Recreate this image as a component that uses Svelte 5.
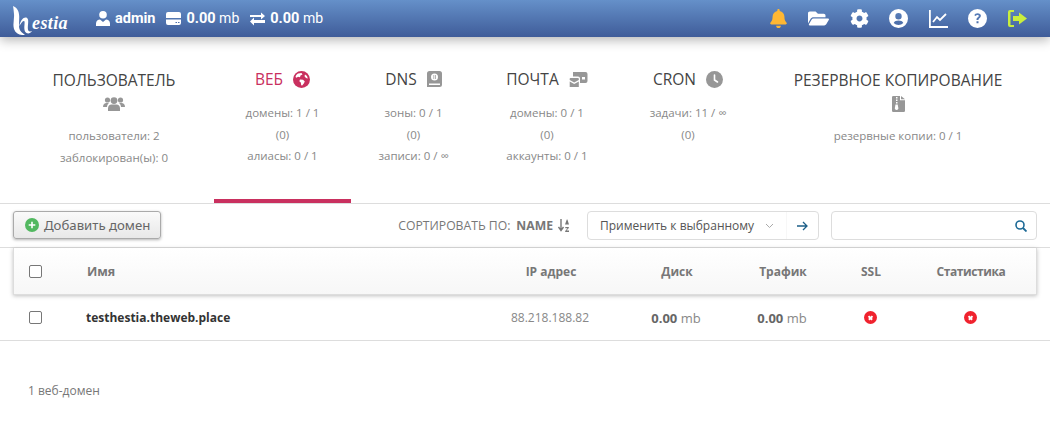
<script>
	const tabs = [
		{ title: 'ПОЛЬЗОВАТЕЛЬ', icon: 'users', below: true, lines: ['пользователи: 2', 'заблокирован(ы): 0'] },
		{ title: 'ВЕБ', icon: 'globe', active: true, lines: ['домены: 1 / 1', '(0)', 'алиасы: 0 / 1'] },
		{ title: 'DNS', icon: 'book', lines: ['зоны: 0 / 1', '(0)', 'записи: 0 / ∞'] },
		{ title: 'ПОЧТА', icon: 'mail', lines: ['домены: 0 / 1', '(0)', 'аккаунты: 0 / 1'] },
		{ title: 'CRON', icon: 'clock', lines: ['задачи: 11 / ∞', '(0)'] },
		{ title: 'РЕЗЕРВНОЕ КОПИРОВАНИЕ', icon: 'zip', below: true, lines: ['резервные копии: 0 / 1'] }
	];
</script>

{#snippet tabIcon(name)}
	{#if name === 'users'}
		<svg width="22" height="16" viewBox="0 0 22 16"><circle cx="4.500" cy="4" r="2.600"/><circle cx="17.500" cy="4" r="2.600"/><circle cx="11" cy="4.600" r="3.400"/><path d="M0 11c0-2.500 1.500-4 3.500-4H6C4.800 8 4 9.500 4 11zM22 11c0-2.500-1.500-4-3.500-4H16c1.200 1 2 2.500 2 4zM5 15v-2.500C5 10 6.500 8.500 8.500 8.500h5c2 0 3.500 1.500 3.500 4V15z"/></svg>
	{:else if name === 'globe'}
		<svg width="17" height="17" viewBox="0 0 17 17"><circle cx="8.500" cy="8.500" r="8.500"/><path fill="#fff" d="M5 2.500l3.500-.5 1 1.500-2 1-.5 1.800-2-.6-1.500 1-1-.7C2.800 4.500 3.500 3.400 5 2.500zM7 8.500l3 .3 1.800 1.700-1 2-1.600 2-1-.3-.4-2.700-1.500-1.200zM12 3.500l2 1.500 .8 2.500-1.800-.5-1.500-1.800z"/></svg>
	{:else if name === 'book'}
		<svg width="15" height="16" viewBox="0 0 15 16"><path fill-rule="evenodd" d="M2.500 0h10A2.500 2.500 0 0 1 15 2.500v11a2.500 2.500 0 0 1-2.500 2.500H0V2.500A2.500 2.500 0 0 1 2.500 0zM7.500 2.500a3.500 3.500 0 1 0 0 7 3.500 3.500 0 0 0 0-7zM2 12.500V14h11v-1.500z"/><path d="M6.500 4h.7v4h-.7zM8 4h.7v4H8z"/></svg>
	{:else if name === 'mail'}
		<svg width="19" height="15" viewBox="0 0 19 15"><path d="M4 0h12.500a2 2 0 0 1 2 2v7a2 2 0 0 1-2 2H11V6.500A2 2 0 0 0 9 4.500H4z"/><path d="M1.500 6H9a.8.800 0 0 1 .8.800V8L5.200 10.500 .7 8V6.800A.8.800 0 0 1 1.500 6zM.7 9.500l4.500 2.500 4.600-2.500V15H.7z"/><rect x="13" y="5" width="3" height="2.500" fill="#fff"/></svg>
	{:else if name === 'clock'}
		<svg width="17" height="17" viewBox="0 0 17 17"><circle cx="8.500" cy="8.500" r="8.500"/><path d="M8.500 4v5l3 2" fill="none" stroke="#fff" stroke-width="1.600" stroke-linecap="round"/></svg>
	{:else}
		<svg width="13" height="16" viewBox="0 0 13 16"><path fill-rule="evenodd" d="M1.200 0H8v4.300h5v10.500A1.200 1.200 0 0 1 11.800 16H1.200A1.200 1.200 0 0 1 0 14.800V1.200A1.200 1.200 0 0 1 1.200 0zM4 1v1.500h1.500V1zM4 3.500V5h1.500V3.500zM4 6v1.500h1.500V6zM3.500 8.500l-.6 3.200a1.800 1.800 0 1 0 3.400 0L5.700 8.500z"/><path d="M9 0l4 3.300H9z"/></svg>
	{/if}
{/snippet}

<header class="topbar">
	<div class="logo">
		<svg width="19" height="29" viewBox="0 0 19 29"><path d="M0 0c4 1.500 6 5 6.200 10 .2 5-.7 10 .3 13 .8 2.500 3 4 5.500 6-5 .5-9.500-1.500-11-6C-.5 18 1.500 13 1 8 .8 5 .5 3 0 0z"/><path d="M6.500 19c1-4 3.500-7.500 6-7.500 2.500 0 3 2.500 2.600 6-.3 3-.5 5.500.2 7 .6 1 2 1.200 3.700.5-1.300 2-3.500 3-5.500 2-2.500-1.500-2.300-5.500-2-8.500.2-2 .2-3.500-.5-3.500-1.500 0-3 2-4.500 5z"/></svg>
		<span>estia</span>
	</div>
	<div class="stat">
		<svg width="14" height="15" viewBox="0 0 14 15"><circle cx="7" cy="3.800" r="3.800"/><path d="M0 15v-2.500C0 10 2 8.500 4 8.500l3 2.500 3-2.500c2 0 4 1.500 4 4V15z"/></svg>
		<b>admin</b>
	</div>
	<div class="stat">
		<svg width="15" height="13" viewBox="0 0 15 13"><path d="M2 0h11a2 2 0 0 1 2 2v4H0V2a2 2 0 0 1 2-2zM0 7.500h15V11a2 2 0 0 1-2 2H2a2 2 0 0 1-2-2zM9.500 10v1H11v-1zM12 10v1h1.500v-1z"/></svg>
		<span><b>0.00</b> mb</span>
	</div>
	<div class="stat">
		<svg width="15" height="14" viewBox="0 0 15 14"><path d="M0 3.500h11V1l4 3.500L11 8V5.500H0zM15 8.500H4V6l-4 4 4 4v-2.500h11z" transform="translate(0 -.5)"/></svg>
		<span><b>0.00</b> mb</span>
	</div>
	<nav class="actions">
		<svg class="bell wide" width="17" height="19" viewBox="0 0 448 512"><path d="M224 512c35.320 0 63.970-28.650 63.970-64H160.030c0 35.350 28.650 64 63.970 64zm215.390-149.710c-19.320-20.760-55.470-51.990-55.470-154.290 0-77.700-54.480-139.900-127.940-155.160V32c0-17.670-14.320-32-31.980-32s-31.980 14.330-31.980 32v20.840C118.560 68.100 64.080 130.300 64.080 208c0 102.300-36.150 133.530-55.470 154.290-6 6.450-8.660 14.160-8.610 21.710.11 16.400 12.980 32 32.100 32h383.800c19.120 0 32-15.600 32.100-32 .05-7.550-2.610-15.270-8.610-21.710z"/></svg>
		<svg class="wide" width="21" height="19" viewBox="0 0 576 512"><path d="M572.694 292.093L500.270 416.248A63.997 63.997 0 0 1 444.989 448H45.025c-18.523 0-30.064-20.093-20.731-36.093l72.424-124.155A64 64 0 0 1 152 256h399.964c18.523 0 30.064 20.093 20.730 36.093zM152 224h328v-48c0-26.510-21.490-48-48-48H272l-64-64H48C21.490 64 0 85.490 0 112v278.046l69.077-118.418C86.214 242.250 117.989 224 152 224z"/></svg>
		<svg width="19" height="19" viewBox="0 0 512 512"><path d="M487.400 315.700l-42.600-24.600c4.300-23.200 4.300-47 0-70.200l42.600-24.600c4.900-2.800 7.100-8.600 5.500-14-11.100-35.600-30-67.800-54.700-94.600-3.800-4.100-10-5.100-14.800-2.300L380.800 110c-17.900-15.400-38.500-27.300-60.800-35.100V25.800c0-5.600-3.900-10.500-9.400-11.700-36.700-8.200-74.300-7.800-109.200 0-5.500 1.200-9.400 6.100-9.400 11.700V75c-22.200 7.900-42.800 19.800-60.800 35.100L88.700 85.500c-4.900-2.800-11-1.900-14.800 2.300-24.700 26.700-43.600 58.900-54.700 94.600-1.700 5.400.6 11.200 5.500 14L67.300 221c-4.300 23.200-4.300 47 0 70.200l-42.600 24.600c-4.900 2.800-7.100 8.600-5.500 14 11.100 35.600 30 67.800 54.700 94.600 3.800 4.100 10 5.100 14.800 2.300l42.600-24.600c17.900 15.400 38.500 27.300 60.800 35.100v49.200c0 5.600 3.900 10.500 9.400 11.700 36.700 8.200 74.300 7.800 109.200 0 5.500-1.200 9.400-6.100 9.400-11.700v-49.200c22.200-7.900 42.800-19.800 60.800-35.100l42.600 24.600c4.900 2.800 11 1.900 14.800-2.300 24.700-26.700 43.600-58.900 54.700-94.600 1.500-5.500-.7-11.300-5.600-14.100zM256 336c-44.100 0-80-35.900-80-80s35.900-80 80-80 80 35.900 80 80-35.900 80-80 80z"/></svg>
		<svg class="wide" width="19" height="19" viewBox="0 0 19 19"><path fill-rule="evenodd" d="M9.500 0a9.500 9.500 0 1 1 0 19 9.500 9.500 0 0 1 0-19zM9.500 4a3.200 3.200 0 1 0 0 6.400 3.200 3.200 0 0 0 0-6.400zM9.500 11.500c-2.200 0-4 .8-4.800 2.400a6.800 6.800 0 0 0 9.600 0c-.8-1.600-2.600-2.400-4.800-2.400z"/></svg>
		<svg width="19" height="18" viewBox="0 0 19 18"><path d="M0 0h1.800v16H19v2H0z"/><path d="M4 12l4-5 3 3 6-6" fill="none" stroke="#fff" stroke-width="1.800"/></svg>
		<svg class="wide" width="19" height="19" viewBox="0 0 19 19"><path fill-rule="evenodd" d="M9.500 0a9.500 9.500 0 1 1 0 19 9.500 9.500 0 0 1 0-19zM8.500 12.300v2h2v-2zM9.600 4.300c-1.700 0-2.800.8-3.300 2l1.500.8c.3-.7.800-1.200 1.700-1.200.8 0 1.300.4 1.300 1 0 1.300-2.300 1.200-2.300 3.600v.5h2v-.4c0-1.400 2.400-1.500 2.400-3.800 0-1.600-1.500-2.500-3.300-2.500z"/></svg>
		<svg class="exit" width="19" height="17" viewBox="0 0 19 17"><path d="M2 0h4v2H2.500v13H6v2H2a2 2 0 0 1-2-2V2a2 2 0 0 1 2-2zM11 2.500l8 6-8 6V11H5V6h6z"/></svg>
	</nav>
</header>

<section class="tabs">
	{#each tabs as tab}
		<div class="tab" class:active={tab.active}>
			<div class="tab-title" class:stacked={tab.below}>
				<span>{tab.title}</span>
				{@render tabIcon(tab.icon)}
			</div>
			<ul>
				{#each tab.lines as line}
					<li>{line}</li>
				{/each}
			</ul>
		</div>
	{/each}
</section>

<section class="toolbar">
	<button class="add">
		<svg width="14" height="14" viewBox="0 0 14 14"><circle cx="7" cy="7" r="7" fill="#52b860"/><path d="M7 3.700v6.600M3.700 7h6.600" stroke="#fff" stroke-width="1.600"/></svg>
		Добавить домен
	</button>
	<div class="tools">
		<span class="sort">СОРТИРОВАТЬ ПО: <b>NAME</b>
			<svg width="12" height="13" viewBox="0 0 12 13"><path d="M3 0v10M.5 8L3 11.500 5.500 8" fill="none" stroke="#777" stroke-width="1.400"/><path d="M7 5.500L8.800 .5h.6L11 5.500zM7.300 8h3.500v1l-2.300 2.500h2.500V13H7.200v-1l2.300-2.700H7.300z" fill="#777"/></svg>
		</span>
		<div class="apply">
			<span class="apply-label">Применить к выбранному</span>
			<svg class="chev" width="9" height="6" viewBox="0 0 9 6"><path d="M1 1l3.500 3.500L8 1" fill="none" stroke="#aaa" stroke-width="1"/></svg>
			<span class="apply-go">
				<svg width="11" height="10" viewBox="0 0 11 10"><path d="M0 5h10M6 1l4 4-4 4" fill="none" stroke="#1d5f88" stroke-width="1.300"/></svg>
			</span>
		</div>
		<div class="search">
			<svg width="12" height="12" viewBox="0 0 12 12"><circle cx="5" cy="5" r="4" fill="none" stroke="#1d6a96" stroke-width="1.600"/><path d="M8 8l3.500 3.500" stroke="#1d6a96" stroke-width="1.800"/></svg>
		</div>
	</div>
</section>

<section class="table">
	<div class="row head">
		<span class="check"><i></i></span>
		<span class="name">Имя</span>
		<span class="ip">IP адрес</span>
		<span class="disk">Диск</span>
		<span class="traffic">Трафик</span>
		<span class="ssl">SSL</span>
		<span class="stats">Статистика</span>
	</div>
	<div class="row body">
		<span class="check"><i></i></span>
		<span class="name">testhestia.theweb.place</span>
		<span class="ip">88.218.188.82</span>
		<span class="disk"><b>0.00</b> mb</span>
		<span class="traffic"><b>0.00</b> mb</span>
		<span class="ssl"><em class="off"></em></span>
		<span class="stats"><em class="off"></em></span>
	</div>
</section>

<footer>1 веб-домен</footer>

<style>
	:global(body) {
		background: #fff;
		font-family: "Open Sans", "Noto Sans", sans-serif;
		color: #555;
		overflow: hidden;
	}

	.topbar {
		height: 37px;
		display: flex;
		align-items: center;
		background: linear-gradient(#6590c9, #3f5c99);
		color: #fff;
		font-family: Roboto, sans-serif;
		font-size: 14px;
		box-shadow: 0 3px 12px rgba(0, 0, 0, 0.3);
	}

	.topbar svg {
		fill: #fff;
		flex: none;
	}

	.logo {
		width: 96px;
		padding-left: 13px;
		box-sizing: border-box;
		display: flex;
		align-items: flex-end;
		height: 32px;
		font-family: "Liberation Serif", serif;
		font-style: italic;
		font-weight: 700;
		font-size: 18px;
		line-height: 24px;
		letter-spacing: 0.4px;
	}

	.stat {
		display: flex;
		align-items: center;
		gap: 5px;
		margin-right: 11px;
	}

	.stat b {
		font-size: 14.500px;
	}

	.actions {
		margin-left: auto;
		display: flex;
		align-items: center;
		gap: 20px;
		padding-right: 23px;
	}

	.wide {
		margin-right: 1px;
	}

	.topbar .bell {
		fill: #ffb733;
	}

	.topbar .exit {
		fill: #c9ee3d;
	}

	.tabs {
		display: grid;
		grid-template-columns: 200px 137px 125px 142px 140px 280px;
		padding-left: 14px;
		height: 166px;
		border-bottom: 1px solid #ddd;
	}

	.tab {
		box-sizing: border-box;
		height: 166px;
		padding-top: 32px;
		text-align: center;
	}

	.tab.active {
		border-bottom: 4px solid #c9305f;
	}

	.tab-title {
		display: flex;
		justify-content: center;
		align-items: center;
		gap: 10px;
		height: 20px;
		font-size: 15.500px;
		font-weight: 500;
		color: #444;
	}

	.tab-title.stacked {
		flex-direction: column;
		gap: 5px;
		height: auto;
		margin-bottom: 1px;
	}

	.tab-title svg {
		fill: #979797;
	}

	.active .tab-title {
		color: #c9305f;
	}

	.active .tab-title svg {
		fill: #c9305f;
	}

	ul {
		list-style: none;
		margin: 13px 0 0;
		padding: 0;
		font-size: 11.500px;
		line-height: 21.500px;
		color: #888;
	}

	.toolbar {
		height: 44px;
		display: flex;
		justify-content: space-between;
		padding: 7px 13px 0;
		box-sizing: border-box;
		border-bottom: 1px solid #ddd;
	}

	.add {
		width: 148px;
		height: 28px;
		display: flex;
		align-items: center;
		gap: 5px;
		padding: 0 0 0 11px;
		border: 1px solid #aaa;
		border-radius: 3px;
		background: linear-gradient(#fafafa, #e8e8e8);
		box-shadow: 0 1px 3px rgba(0, 0, 0, 0.3);
		font: 13.200px "Noto Sans", sans-serif;
		color: #666;
	}

	.tools {
		display: flex;
		align-items: flex-start;
		gap: 12px;
	}

	.sort {
		margin-right: 5px;
		height: 29px;
		display: flex;
		align-items: center;
		gap: 5px;
		font-size: 12.200px;
		color: #777;
	}

	.sort b {
		margin-left: 1px;
	}

	.apply, .search {
		height: 29px;
		box-sizing: border-box;
		border: 1px solid #ddd;
		border-radius: 4px;
		display: flex;
		align-items: center;
	}

	.apply {
		width: 232px;
	}

	.apply-label {
		padding-left: 12px;
		font-size: 12px;
		color: #555;
		white-space: nowrap;
	}

	.chev {
		margin-left: 11px;
	}

	.apply-go {
		margin-left: auto;
		width: 32px;
		height: 100%;
		box-sizing: border-box;
		display: flex;
		align-items: center;
		justify-content: center;
		border-left: 1px solid #f7f7f7;
	}

	.search {
		width: 206px;
		justify-content: flex-end;
		padding-right: 9px;
	}

	.row {
		display: grid;
		grid-template-columns: 73px 414px 100px 152px 60px 116px 84px;
		align-items: center;
		font-size: 12px;
	}

	.row.head {
		height: 47px;
		margin: 0 13px;
		box-sizing: border-box;
		border: 1px solid #ddd;
		border-top: 0;
		font-weight: 700;
		color: #777;
		background: linear-gradient(#fff, #f7f7f7);
		box-shadow: 0 1px 4px rgba(0, 0, 0, 0.25);
	}

	.row.body {
		height: 45px;
		padding: 0 13px;
		border-bottom: 1px solid #ddd;
	}

	.check {
		padding-left: 16px;
		box-sizing: border-box;
		display: flex;
	}

	.head .check {
		padding-left: 15px;
	}

	.check i {
		width: 13px;
		height: 13px;
		box-sizing: border-box;
		border: 1px solid #777;
		border-radius: 2px;
		background: #fff;
	}

	.name {
		white-space: nowrap;
	}

	.head .name {
		font-size: 12.500px;
	}

	.body .name {
		font-weight: 700;
		color: #333;
	}

	.ip, .disk, .traffic, .ssl, .stats {
		text-align: center;
		white-space: nowrap;
	}

	.head .stats {
		letter-spacing: -0.4px;
	}

	.body .ip, .body .disk, .body .traffic {
		color: #888;
	}

	.body .disk, .body .traffic {
		font-size: 13px;
	}

	.body b {
		color: #666;
	}

	.off {
		display: block;
		width: 13px;
		height: 13px;
		margin: -1px auto 0;
		border-radius: 50%;
		background: #f0222e;
		position: relative;
	}

	.off::before, .off::after {
		content: "";
		position: absolute;
		left: 4px;
		top: 6px;
		width: 5px;
		height: 1.500px;
		background: #fff;
		transform: rotate(45deg);
	}

	.off::after {
		transform: rotate(-45deg);
	}

	footer {
		padding: 41px 28px 0;
		font-size: 12px;
		color: #777;
	}
</style>
